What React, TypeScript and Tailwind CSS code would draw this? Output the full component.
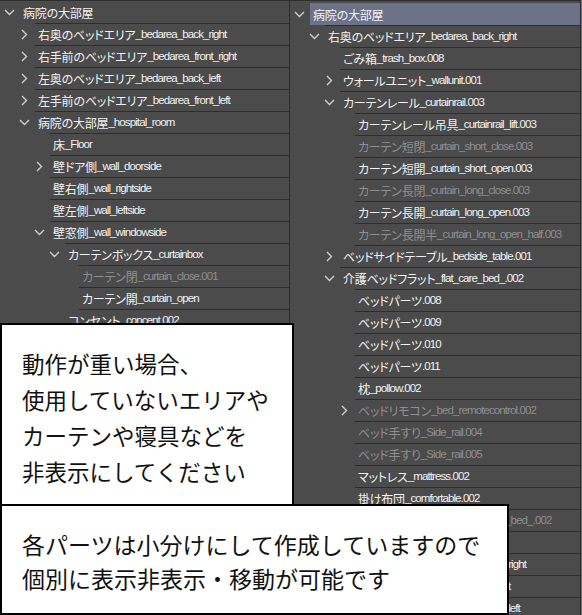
import React from "react";

type Item = { t: string; l: number; c?: "d" | "r"; dim?: boolean; hl?: boolean };

const PL = ["pl-[2px]", "pl-[17px]", "pl-[32px]", "pl-[47px]", "pl-[61px]"];
const ML = ["ml-[20px]", "ml-[35px]", "ml-[50px]", "ml-[65px]", "ml-[79px]"];

const leftItems: Item[] = [
  { t: "病院の大部屋", l: 0, c: "d" },
  { t: "右奥のベッドエリア_bedarea_back_right", l: 1, c: "r" },
  { t: "右手前のベッドエリア_bedarea_front_right", l: 1, c: "r" },
  { t: "左奥のベッドエリア_bedarea_back_left", l: 1, c: "r" },
  { t: "左手前のベッドエリア_bedarea_front_left", l: 1, c: "r" },
  { t: "病院の大部屋_hospital_room", l: 1, c: "d" },
  { t: "床_Floor", l: 2 },
  { t: "壁ドア側_wall_doorside", l: 2, c: "r" },
  { t: "壁右側_wall_rightside", l: 2 },
  { t: "壁左側_wall_leftside", l: 2 },
  { t: "壁窓側_wall_windowside", l: 2, c: "d" },
  { t: "カーテンボックス_curtainbox", l: 3, c: "d" },
  { t: "カーテン閉_curtain_close.001", l: 4, dim: true },
  { t: "カーテン開_curtain_open", l: 4 },
  { t: "コンセント_concent.002", l: 3 },
  { t: "コンセント_concent.003", l: 3 },
  { t: "窓_window.001", l: 3 },
  { t: "天井_ceiling", l: 2 },
  { t: "照明_light.001", l: 2 },
  { t: "照明_light.002", l: 2 },
  { t: "ドア_door.001", l: 2, c: "r" },
  { t: "洗面台_washstand", l: 2 },
  { t: "手すり_handrail.001", l: 2 },
  { t: "手すり_handrail.002", l: 2 },
  { t: "棚_shelf.001", l: 2 },
  { t: "時計_clock", l: 2 },
  { t: "ゴミ箱_trash_box.001", l: 2 },
  { t: "椅子_chair.001", l: 2 },
];

const rightItems: Item[] = [
  { t: "病院の大部屋", l: 0, c: "d", hl: true },
  { t: "右奥のベッドエリア_bedarea_back_right", l: 1, c: "d" },
  { t: "ごみ箱_trash_box.008", l: 2 },
  { t: "ウォールユニット_wallunit.001", l: 2, c: "r" },
  { t: "カーテンレール_curtainrail.003", l: 2, c: "d" },
  { t: "カーテンレール吊具_curtainrail_lift.003", l: 3 },
  { t: "カーテン短閉_curtain_short_close.003", l: 3, dim: true },
  { t: "カーテン短開_curtain_short_open.003", l: 3 },
  { t: "カーテン長閉_curtain_long_close.003", l: 3, dim: true },
  { t: "カーテン長開_curtain_long_open.003", l: 3 },
  { t: "カーテン長開半_curtain_long_open_half.003", l: 3, dim: true },
  { t: "ベッドサイドテーブル_bedside_table.001", l: 2, c: "r" },
  { t: "介護ベッドフラット_flat_care_bed_.002", l: 2, c: "d" },
  { t: "ベッドパーツ.008", l: 3 },
  { t: "ベッドパーツ.009", l: 3 },
  { t: "ベッドパーツ.010", l: 3 },
  { t: "ベッドパーツ.011", l: 3 },
  { t: "枕_pollow.002", l: 3 },
  { t: "ベッドリモコン_bed_remotecontrol.002", l: 3, c: "r", dim: true },
  { t: "ベッド手すり_Side_rail.004", l: 3, dim: true },
  { t: "ベッド手すり_Side_rail.005", l: 3, dim: true },
  { t: "マットレス_mattress.002", l: 3 },
  { t: "掛け布団_comfortable.002", l: 3 },
  { t: "介護ベッド背上げ_back_raised_bed_.002", l: 3, dim: true },
  { t: "床頭台_cabinet.002", l: 2 },
  { t: "右手前のベッドエリア_bedarea_front_right", l: 1, c: "r" },
  { t: "左奥のベッドエリア_bedarea_back_left", l: 1, c: "r" },
  { t: "左手前のベッドエリア_bedarea_front_left", l: 1, c: "r" },
];

function Label({ t }: { t: string }) {
  const parts = t.split(/([\x20-\x7e]+)/).filter(Boolean);
  return (
    <>
      {parts.map((p, i) =>
        /^[\x20-\x7e]+$/.test(p) ? (
          <span key={i} className="font-['Liberation_Sans',sans-serif] text-[11.5px] tracking-[-0.9px]">
            {p}
          </span>
        ) : (
          <span key={i} className="font-['Noto_Sans_CJK_JP',sans-serif] text-[12px] tracking-[-0.2px] [font-feature-settings:'palt']">
            {p}
          </span>
        )
      )}
    </>
  );
}

function Chevron({ c }: { c?: "d" | "r" }) {
  if (c === "d")
    return (
      <svg width="11" height="7" viewBox="0 0 11 7" className="block">
        <path d="M1 1 L5.5 5.5 L10 1" fill="none" stroke="#cfcfcf" strokeWidth="1.4" />
      </svg>
    );
  if (c === "r")
    return (
      <svg width="7" height="11" viewBox="0 0 7 11" className="block">
        <path d="M1 1 L5.5 5.5 L1 10" fill="none" stroke="#cfcfcf" strokeWidth="1.4" />
      </svg>
    );
  return null;
}

function Tree({ items }: { items: Item[] }) {
  return (
    <div className="flex flex-col">
      {items.map((it, i) => (
        <React.Fragment key={i}>
          {i > 0 && (
            <div className={`h-px shrink-0 bg-[#2d2d2d] ${ML[Math.max(it.l, items[i - 1].l)]}`} />
          )}
          <div className={`flex shrink-0 items-center ${i === 0 ? "h-[22px]" : "h-[21px]"} ${PL[it.l]}`}>
            <div className="flex h-full w-[14px] shrink-0 items-center justify-center">
              <Chevron c={it.c} />
            </div>
            <div
              className={`ml-[4px] flex h-full flex-1 items-center whitespace-nowrap pl-[3px] ${
                it.dim ? "text-[#8f8f8f]" : "text-[#f2f2f2]"
              } ${it.hl ? "bg-[#6c7389]" : ""}`}
            >
              <Label t={it.t} />
            </div>
          </div>
        </React.Fragment>
      ))}
    </div>
  );
}

export default function App() {
  return (
    <div className="relative flex h-[615px] w-[582px] overflow-hidden bg-[#4b4b4b] font-['Liberation_Sans','Noto_Sans_CJK_JP',sans-serif] text-[12px] leading-[21px]">
      <div className="w-[289px] shrink-0 overflow-hidden border-t border-[#2d2d2d]">
        <Tree items={leftItems} />
      </div>
      <div className="w-px shrink-0 bg-[#2d2d2d]" />
      <div className="w-[290px] shrink-0 overflow-hidden border-t border-[#2d2d2d] pt-[2px]">
        <Tree items={rightItems} />
      </div>
      <div className="w-px shrink-0 bg-[#2d2d2d]" />
      <div className="w-px shrink-0 bg-[#707070]" />

      <div className="absolute left-0 top-[323px] h-[183px] w-[294px] border-2 border-black bg-white pl-[20px] pt-[20px] font-['Noto_Sans_CJK_JP',sans-serif] text-[22.5px] leading-[36px] text-[#111]">
        <div>動作が重い場合、</div>
        <div>使用していないエリアや</div>
        <div>カーテンや寝具などを</div>
        <div>非表示にしてください</div>
      </div>
      <div className="absolute left-0 top-[504px] h-[111px] w-[509px] border-2 border-black bg-white pl-[20px] pt-[21px] font-['Noto_Sans_CJK_JP',sans-serif] text-[23px] leading-[34px] text-[#111]">
        <div>各パーツは小分けにして作成していますので</div>
        <div>個別に表示非表示・移動が可能です</div>
      </div>
    </div>
  );
}
